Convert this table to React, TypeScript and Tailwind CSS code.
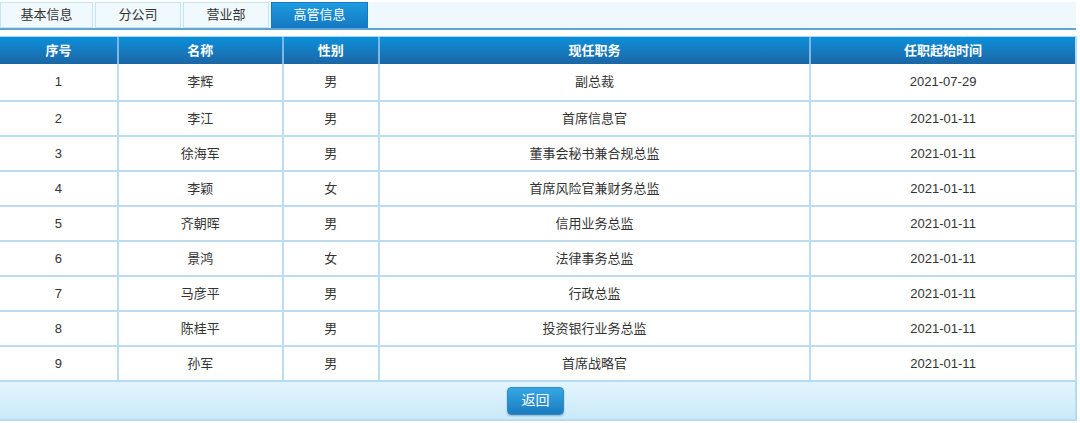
import React from 'react';

const rows = [
  ['1', '李辉', '男', '副总裁', '2021-07-29'],
  ['2', '李江', '男', '首席信息官', '2021-01-11'],
  ['3', '徐海军', '男', '董事会秘书兼合规总监', '2021-01-11'],
  ['4', '李颖', '女', '首席风险官兼财务总监', '2021-01-11'],
  ['5', '齐朝晖', '男', '信用业务总监', '2021-01-11'],
  ['6', '景鸿', '女', '法律事务总监', '2021-01-11'],
  ['7', '马彦平', '男', '行政总监', '2021-01-11'],
  ['8', '陈桂平', '男', '投资银行业务总监', '2021-01-11'],
  ['9', '孙军', '男', '首席战略官', '2021-01-11'],
];

const tabs = [
  { label: '基本信息', w: 'w-[93px]' },
  { label: '分公司', w: 'w-[86px]' },
  { label: '营业部', w: 'w-[86px]' },
  { label: '高管信息', w: 'w-[97px]', active: true },
];

const cols = ['w-[117px]', 'w-[165px]', 'w-[96px]', 'w-[432px]', 'w-[266px]'];
const heads = ['序号', '名称', '性别', '现任职务', '任职起始时间'];

export default function App() {
  return (
    <div
      className="w-[1080px] h-[423px] bg-white text-[13px] text-[#333]"
      style={{ fontFamily: '"Liberation Sans", "Noto Sans CJK SC", sans-serif' }}
    >
      {/* tab bar */}
      <div className="w-[1076px] mt-[2px] h-[26px] bg-[#eef8fd] border-b-2 border-[#5ea6d6] flex gap-[2px] box-content">
        {tabs.map((t) => (
          <div
            key={t.label}
            className={
              t.active
                ? `${t.w} flex items-center justify-center text-white bg-gradient-to-b from-[#1e9be0] to-[#1479c2] border border-[#1479c2]`
                : `${t.w} flex items-center justify-center border border-[#c9e3f2] bg-[#f0f9fe]`
            }
          >
            {t.label}
          </div>
        ))}
      </div>

      {/* table */}
      <div className="mt-[6px] w-[1077px] border-r-2 border-[#b5dbf5]">
        <div className="flex h-[28px] bg-gradient-to-b from-[#0890da] to-[#1a66a6] text-white font-bold border-t border-[#a9d7f2]">
          {heads.map((h, i) => (
            <div
              key={h}
              className={`${cols[i]} flex items-center justify-center ${i > 0 ? 'border-l-2 border-[#7cb9e6]' : ''}`}
            >
              {h}
            </div>
          ))}
        </div>
        {rows.map((r, ri) => (
          <div
            key={r[0]}
            className={ri === 0 ? 'flex h-[36px]' : 'flex h-[35px] border-t-2 border-[#bcdcf3]'}
          >
            {r.map((c, i) => (
              <div
                key={i}
                className={`${cols[i]} flex items-center justify-center ${i > 0 ? 'border-l-2 border-[#bcdcf3]' : ''}`}
              >
                {c}
              </div>
            ))}
          </div>
        ))}
        <div className="h-[41px] border-t-2 border-b-2 border-[#b5dbf5] bg-gradient-to-b from-[#e3f5fd] to-[#c9eaf9] flex items-center justify-center">
          <button className="ml-[-4px] w-[57px] h-[28px] rounded-[4px] border border-[#2d8cc7] bg-gradient-to-b from-[#36a7e2] to-[#1a7cc0] text-white text-[14px] shadow-[0_1px_2px_rgba(0,0,0,0.25)]">
            返回
          </button>
        </div>
      </div>
    </div>
  );
}
